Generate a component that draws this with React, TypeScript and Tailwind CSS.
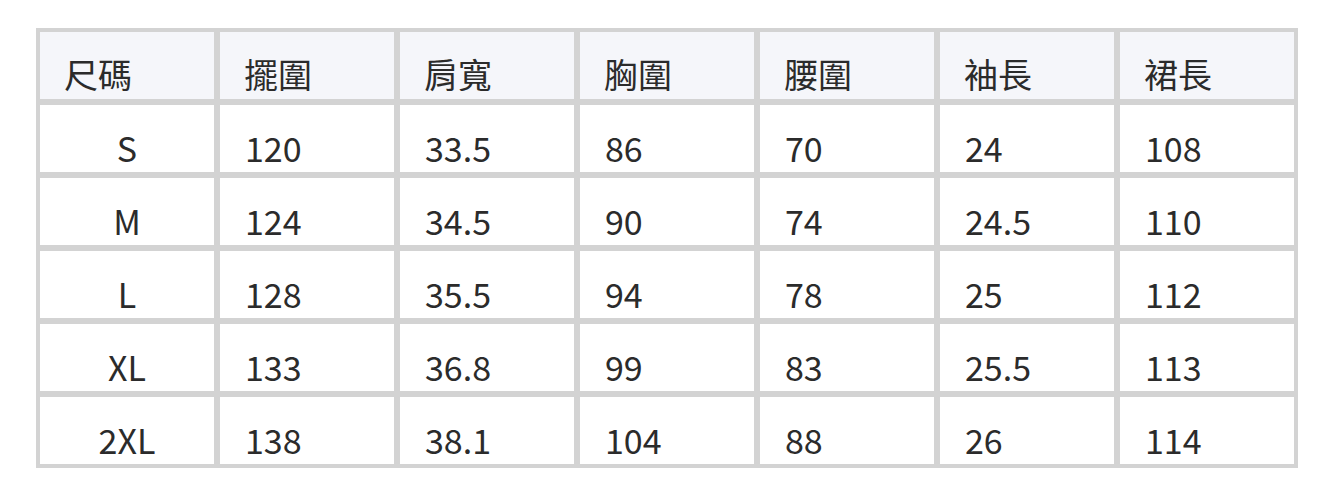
const headers = ["尺碼", "擺圍", "肩寬", "胸圍", "腰圍", "袖長", "裙長"];

const rows = [
  ["S", "120", "33.5", "86", "70", "24", "108"],
  ["M", "124", "34.5", "90", "74", "24.5", "110"],
  ["L", "128", "35.5", "94", "78", "25", "112"],
  ["XL", "133", "36.8", "99", "83", "25.5", "113"],
  ["2XL", "138", "38.1", "104", "88", "26", "114"],
];

export default function App() {
  return (
    <div
      className="min-h-[495px] bg-white pl-[36px] pt-[28px]"
      style={{ fontFamily: '"Noto Sans CJK TC", sans-serif' }}
    >
      <div className="w-[1262px] bg-[#d3d3d3] p-[4px] grid grid-cols-7 gap-[6px] text-[34px] leading-[1.4] text-[#2b2b2b]">
        {headers.map((h) => (
          <div key={h} className="h-[67px] bg-[#f5f6fa] flex items-end pl-[24px] pb-[1px]">
            {h}
          </div>
        ))}
        {rows.map((row) =>
          row.map((cell, i) => (
            <div
              key={row[0] + i}
              className={
                i === 0
                  ? "h-[67px] bg-white flex items-end justify-center"
                  : "h-[67px] bg-white flex items-end pl-[25px]"
              }
            >
              {cell}
            </div>
          ))
        )}
      </div>
    </div>
  );
}
